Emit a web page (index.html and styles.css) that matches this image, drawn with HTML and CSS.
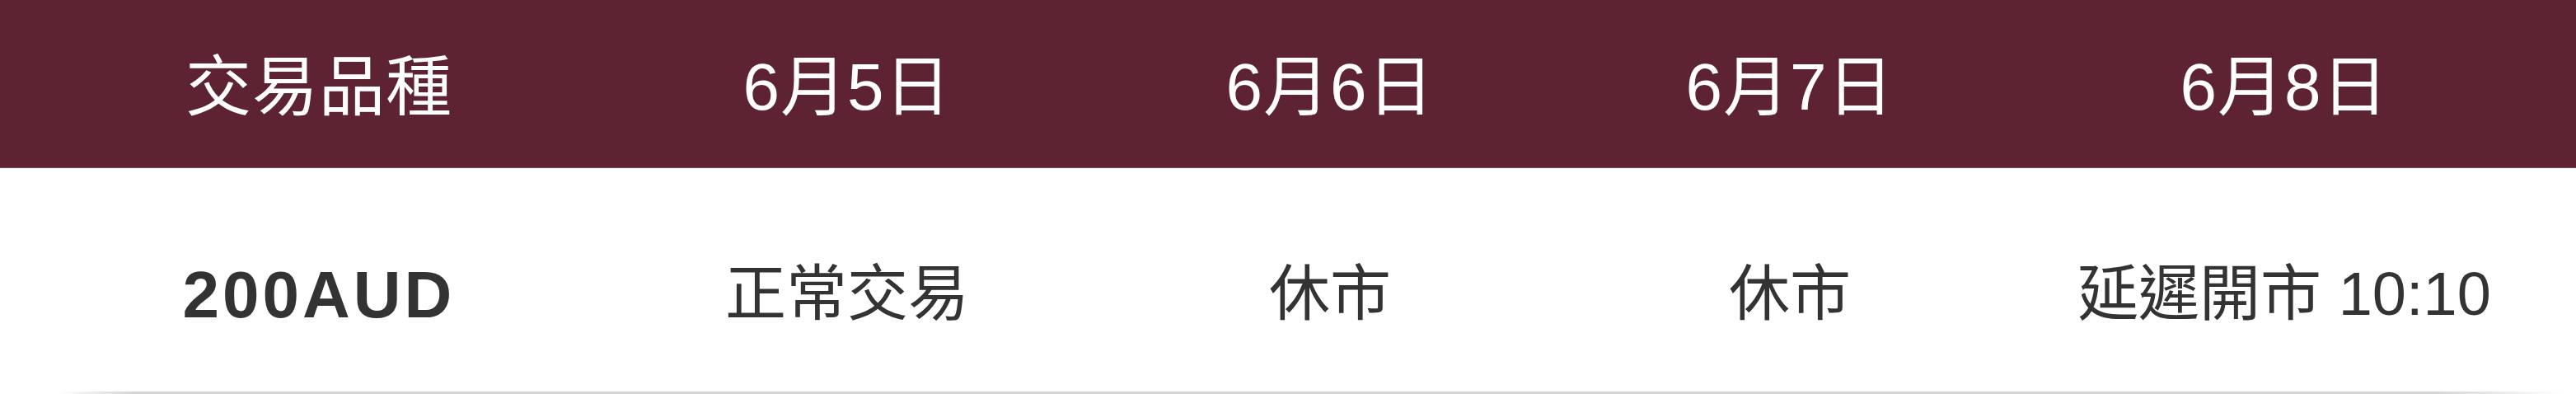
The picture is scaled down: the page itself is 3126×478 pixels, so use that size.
FILE: index.html
```html
<!DOCTYPE html>
<html lang="zh-Hant">
<head>
<meta charset="utf-8">
<title>交易時間</title>
<link rel="stylesheet" href="styles.css">
</head>
<body>
<div class="schedule">
  <div class="row head">
    <div class="cell">交易品種</div>
    <div class="cell">6月5日</div>
    <div class="cell">6月6日</div>
    <div class="cell">6月7日</div>
    <div class="cell last">6月8日</div>
  </div>
  <div class="row body">
    <div class="cell symbol">200AUD</div>
    <div class="cell">正常交易</div>
    <div class="cell">休市</div>
    <div class="cell">休市</div>
    <div class="cell last">延遲開市 10:10</div>
  </div>
  <div class="shade"></div>
</div>
</body>
</html>
```
FILE: styles.css
```css
html, body {
  margin: 0;
  padding: 0;
  background: #ffffff;
}

body {
  width: 3126px;
  height: 478px;
  overflow: hidden;
  font-family: "Liberation Sans", "Noto Sans CJK TC", sans-serif;
}

.schedule {
  display: flex;
  flex-direction: column;
}

.row {
  display: grid;
  grid-template-columns: 774px 508px 664px 452px 1fr;
}

.cell {
  display: flex;
  align-items: center;
  justify-content: center;
  line-height: 1.2;
  white-space: nowrap;
}

.cell.last {
  padding-left: 20px;
}

.head {
  height: 203px;
  padding-top: 8px;
  box-sizing: content-box;
  height: 195px;
  background: #5d2333;
  border-bottom: 1px solid #7a4858;
  color: #ffffff;
  font-size: 80px;
}

.head .cell {
  letter-spacing: 1px;
}

.body {
  height: 271px;
  color: #333333;
  font-size: 74px;
  padding-top: 36px;
  box-sizing: border-box;
}

.symbol {
  font-size: 80px;
  font-weight: 700;
  letter-spacing: 4px;
}

.shade {
  height: 4px;
  background: linear-gradient(to right,
    rgba(0,0,0,0) 70px,
    rgba(0,0,0,0.16) 160px,
    rgba(0,0,0,0.16) 2960px,
    rgba(0,0,0,0) 3110px);
}
```
